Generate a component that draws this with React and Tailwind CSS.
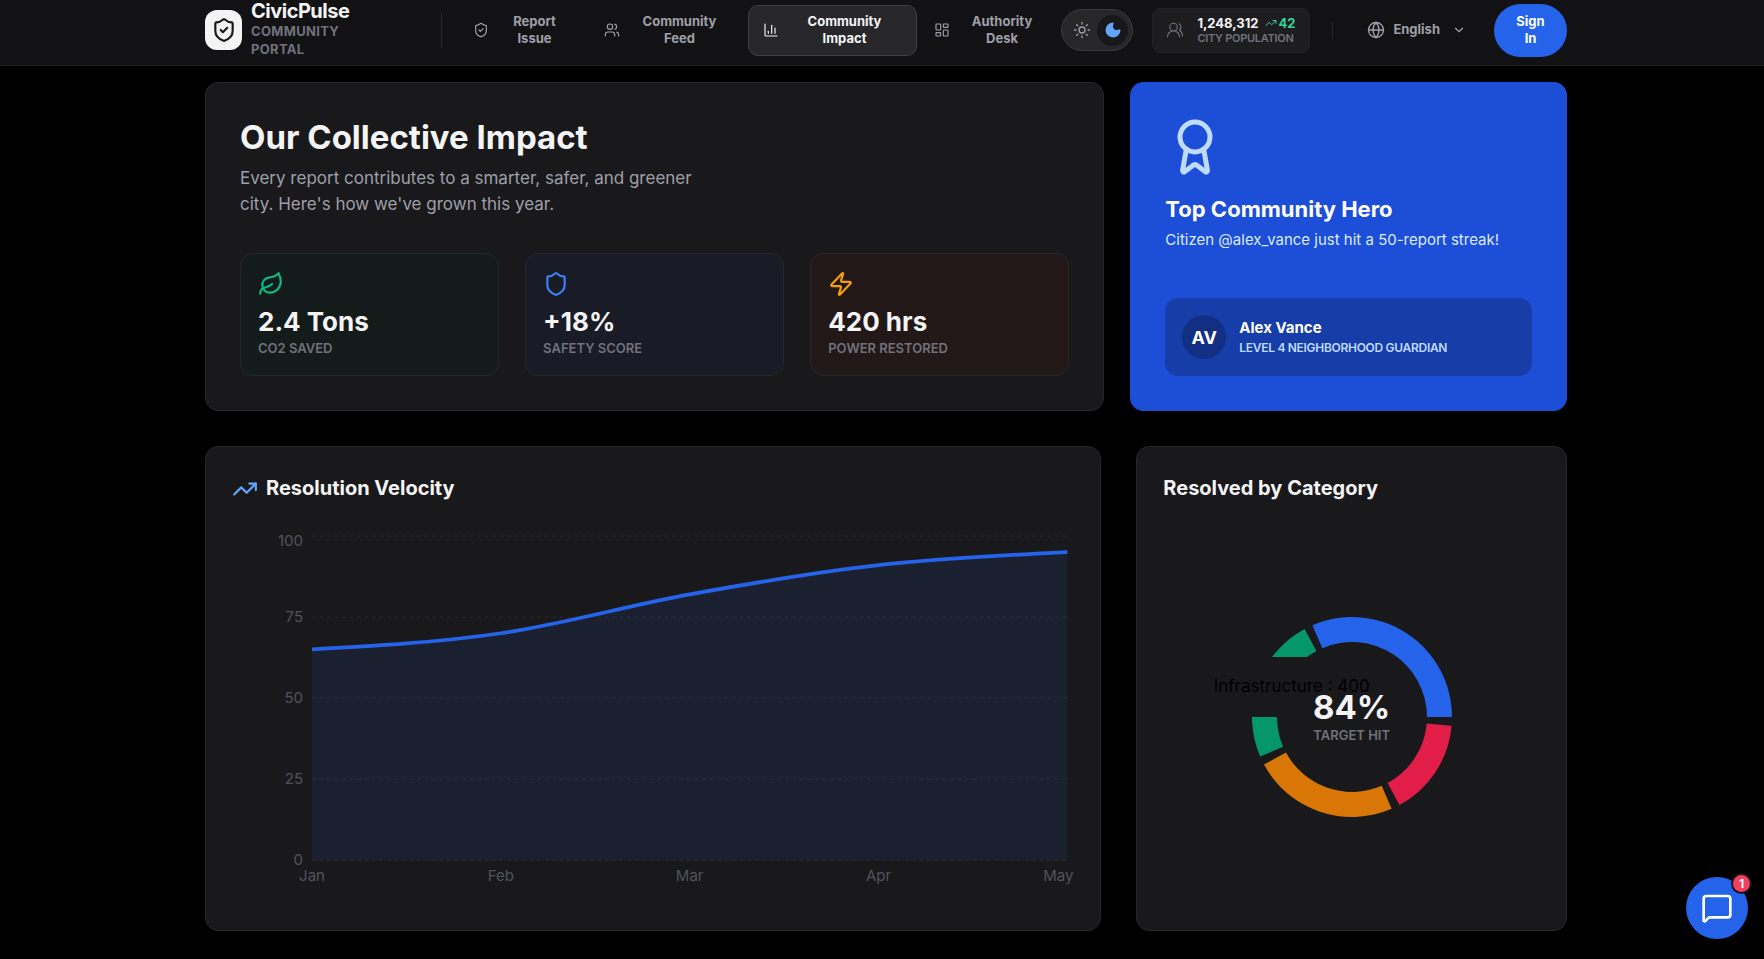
import React, { useState } from "react";
import {
  Award,
  ChartColumn,
  ChevronDown,
  Globe,
  LayoutDashboard,
  Leaf,
  MessageSquare,
  Moon,
  Shield,
  ShieldCheck,
  Sun,
  TrendingUp,
  Users,
  UsersRound,
  Zap,
} from "lucide-react";

const navItems = [
  { id: "report", label: "Report Issue", icon: ShieldCheck, width: "w-[129px]" },
  { id: "feed", label: "Community Feed", icon: Users, width: "w-[157px]" },
  { id: "impact", label: "Community Impact", icon: ChartColumn, width: "w-[169px]" },
  { id: "desk", label: "Authority Desk", icon: LayoutDashboard, width: "w-[142px]" },
];

const stats = [
  { label: "CO2 Saved", value: "2.4 Tons", icon: Leaf, color: "text-[#10b981]", bg: "bg-[#131b1b]" },
  { label: "Safety Score", value: "+18%", icon: Shield, color: "text-[#3b82f6]", bg: "bg-[#191b27]" },
  { label: "Power Restored", value: "420 hrs", icon: Zap, color: "text-[#f59e0b]", bg: "bg-[#221817]" },
];

const velocityData = [
  { name: "Jan", value: 65 },
  { name: "Feb", value: 70 },
  { name: "Mar", value: 82 },
  { name: "Apr", value: 91 },
  { name: "May", value: 95 },
];

const categoryData = [
  { name: "Infrastructure", value: 400, color: "#2563eb" },
  { name: "Environment", value: 300, color: "#059669" },
  { name: "Utilities", value: 300, color: "#d97706" },
  { name: "Safety", value: 200, color: "#e11d48" },
];

// Monotone cubic through equally spaced points
const getCurve = (points) => {
  const h = points[1].x - points[0].x;
  const s = points.slice(1).map((p, i) => (p.y - points[i].y) / h);
  const m = points.map((p, i) => {
    if (i === 0 || i === points.length - 1) return 0;
    return (
      (Math.sign(s[i - 1]) + Math.sign(s[i])) *
      Math.min(Math.abs(s[i - 1]), Math.abs(s[i]), Math.abs(s[i - 1] + s[i]) / 4)
    );
  });
  const last = points.length - 1;
  m[0] = (3 * s[0] - m[1]) / 2;
  m[last] = (3 * s[last - 1] - m[last - 1]) / 2;

  let d = `M${points[0].x},${points[0].y}`;
  for (let i = 0; i < last; i++) {
    const a = points[i];
    const b = points[i + 1];
    d += `C${a.x + h / 3},${a.y + (m[i] * h) / 3} ${b.x - h / 3},${b.y - (m[i + 1] * h) / 3} ${b.x},${b.y}`;
  }
  return d;
};

const VelocityChart = () => {
  const left = 80;
  const right = 835;
  const top = 6;
  const bottom = 330;
  const toY = (value) => bottom - ((bottom - top) * value) / 100;
  const step = (right - left) / (velocityData.length - 1);
  const points = velocityData.map((d, i) => ({ x: left + i * step, y: toY(d.value) }));
  const curve = getCurve(points);

  return (
    <svg viewBox="0 0 842 374" className="w-full block" role="img" aria-label="Resolution Velocity">
      {[0, 25, 50, 75, 100].map((tick) => (
        <g key={tick}>
          <line
            x1={left}
            x2={right}
            y1={toY(tick)}
            y2={toY(tick)}
            stroke="#27272a"
            strokeWidth="1.25"
            strokeDasharray="3.75 3.75"
          />
          <text
            x={71}
            y={Math.max(toY(tick), 11) + 5}
            textAnchor="end"
            fill="#52525b"
            className="text-[15px]"
          >
            {tick}
          </text>
        </g>
      ))}
      <path d={`${curve}L${right},${bottom}L${left},${bottom}Z`} fill="#2563eb" fillOpacity="0.1" />
      <path d={curve} fill="none" stroke="#2563eb" strokeWidth="3.75" />
      {velocityData.map((d, i) => (
        <text
          key={d.name}
          x={i === velocityData.length - 1 ? 826 : points[i].x}
          y={351}
          textAnchor="middle"
          fill="#52525b"
          className="text-[15px]"
        >
          {d.name}
        </text>
      ))}
    </svg>
  );
};

const getSector = (start, end) => {
  const at = (r, deg) => {
    const a = (deg * Math.PI) / 180;
    return `${100 + r * Math.cos(a)},${100 - r * Math.sin(a)}`;
  };
  return `M${at(100, start)}A100,100 0 0 0 ${at(100, end)}L${at(75, end)}A75,75 0 0 1 ${at(75, start)}Z`;
};

const CategoryChart = () => {
  const total = categoryData.reduce((sum, c) => sum + c.value, 0);
  let angle = 0;
  const sectors = categoryData.map((c) => {
    const sweep = (c.value / total) * 340;
    const d = getSector(angle, angle + sweep);
    angle += sweep + 5;
    return { ...c, d };
  });

  return (
    <div className="relative size-[200px]">
      <svg viewBox="0 0 200 200" className="size-full" role="img" aria-label="Resolved by Category">
        {sectors.map((s) => (
          <path key={s.name} d={s.d} fill={s.color} />
        ))}
      </svg>
      <div className="absolute -left-12 top-10 h-[60px] px-[10px] flex items-center bg-[#19191b] text-black text-[17px] whitespace-nowrap">
        Infrastructure : 400
      </div>
      <div className="absolute inset-0 flex flex-col items-center justify-center">
        <p className="text-[33px] leading-9 font-bold text-zinc-100">84%</p>
        <p className="text-[13px] leading-5 font-semibold text-zinc-500 uppercase">Target Hit</p>
      </div>
    </div>
  );
};

const Header = () => {
  const [active, setActive] = useState("impact");

  return (
    <header className="h-[66px] pl-2 bg-[#121214] border-b border-[#222225]">
      <div className="max-w-[1362px] h-[60px] mx-auto flex items-center justify-between">
        <div className="flex items-center">
          <div className="w-[236px] flex items-center gap-[9px]">
            <div className="w-[37px] h-10 rounded-xl bg-zinc-100 flex items-center justify-center text-zinc-900">
              <ShieldCheck className="size-[26px]" />
            </div>
            <div className="pb-[3px]">
              <p className="text-[20px] leading-[22px] font-bold tracking-tight text-zinc-100">CivicPulse</p>
              <p className="text-[13px] leading-[18px] font-bold tracking-wide text-zinc-500 uppercase">
                Community
                <br />
                Portal
              </p>
            </div>
          </div>
          <div className="h-9 w-px mr-4 bg-[#27272a]" />

          <nav className="flex items-center gap-[2px]">
            {navItems.map(({ id, label, icon: Icon, width }) => (
              <button
                key={id}
                onClick={() => setActive(id)}
                className={`${width} h-[51px] px-[14px] flex items-center gap-2 rounded-[10px] border text-[13px] leading-[17px] font-bold ${
                  active === id
                    ? "bg-[#27272a] border-[#3f3f46] text-zinc-100"
                    : "border-transparent text-zinc-400"
                }`}
              >
                <Icon className="size-4 shrink-0" strokeWidth={1.75} />
                <span className="flex-1 px-2 text-center">{label}</span>
              </button>
            ))}
          </nav>

          <button
            aria-label="Toggle theme"
            className="w-[72px] h-[42px] px-1 rounded-full border border-[#3a3a3e] bg-[#27272a] flex items-center justify-between"
          >
            <span className="size-[31px] flex items-center justify-center">
              <Sun className="size-[18px] text-zinc-400" strokeWidth={1.75} />
            </span>
            <span className="size-[31px] rounded-full bg-[#18181b] flex items-center justify-center">
              <Moon className="size-[18px] text-[#60a5fa] fill-[#60a5fa]" />
            </span>
          </button>
        </div>

        <div className="flex items-center">
          <div className="w-[158px] h-[45px] px-[13px] rounded-lg border border-[#222225] bg-[#1d1d20] flex items-center gap-[13px]">
            <UsersRound className="size-[18px] shrink-0 text-zinc-500" strokeWidth={1.5} />
            <div>
              <p className="flex items-center gap-[6px] text-[13px] leading-4 font-bold text-zinc-100">
                1,248,312
                <span className="flex items-center gap-[2px] text-[#34d399]">
                  <TrendingUp className="size-3" />
                  42
                </span>
              </p>
              <p className="text-[11px] leading-[14px] font-semibold tracking-tight text-zinc-500 uppercase whitespace-nowrap">
                City Population
              </p>
            </div>
          </div>
          <div className="h-[17px] w-px mx-[22px] bg-[#27272a]" />

          <button className="px-3 mr-4 flex items-center gap-2 text-[13px] font-bold text-zinc-400">
            <Globe className="size-[18px]" strokeWidth={1.75} />
            English
            <ChevronDown className="size-[14px] ml-1" />
          </button>
          <button className="w-[73px] h-[53px] px-5 rounded-full bg-[#2563eb] text-white text-[13px] leading-[17px] font-bold">
            Sign In
          </button>
        </div>
      </div>
    </header>
  );
};

const App = () => {
  return (
    <div className="min-h-screen bg-black font-['Inter',sans-serif]">
      <Header />

      <div className="pl-2">
        <main className="max-w-[1362px] mx-auto pt-4 pb-6 flex flex-col gap-[35px]">
          <div className="grid grid-cols-3 gap-[26px]">
            <section className="col-span-2 p-[34px] rounded-[13px] border border-[#27272a] bg-[#19191b]">
              <h1 className="text-[33px] leading-10 font-bold text-zinc-100">Our Collective Impact</h1>
              <p className="mt-2 max-w-[480px] text-[17px] leading-[26px] text-zinc-400">
                Every report contributes to a smarter, safer, and greener city. Here's how we've grown this year.
              </p>
              <div className="mt-9 grid grid-cols-3 gap-[26px]">
                {stats.map(({ label, value, icon: Icon, color, bg }) => (
                  <div key={label} className={`p-[17px] rounded-[13px] border border-[#27272a] ${bg}`}>
                    <Icon className={`size-[26px] ${color}`} />
                    <p className="mt-[7px] text-[26px] leading-[35px] font-bold text-zinc-100">{value}</p>
                    <p className="text-[13px] leading-[19px] font-semibold text-zinc-500 uppercase">{label}</p>
                  </div>
                ))}
              </div>
            </section>

            <section className="p-[34px] rounded-[13px] border border-[#1d4ed8] bg-[#1d4ed8] flex flex-col justify-between">
              <div>
                <Award className="size-[60px] text-[#bfdbfe]" />
                <h2 className="mt-4 text-[22px] leading-8 font-bold text-white">Top Community Hero</h2>
                <p className="mt-1 text-[15px] leading-[22px] text-[#dbeafe]">
                  Citizen @alex_vance just hit a 50-report streak!
                </p>
              </div>
              <div className="p-[17px] rounded-[13px] bg-[#173da9] flex items-center gap-[13px]">
                <div className="size-11 rounded-full bg-[#122f83] flex items-center justify-center text-[18px] font-bold text-white">
                  AV
                </div>
                <div>
                  <p className="text-[15px] leading-[22px] font-bold text-white">Alex Vance</p>
                  <p className="text-[12px] leading-[18px] font-semibold tracking-tight text-[#bfdbfe] uppercase">
                    Level 4 Neighborhood Guardian
                  </p>
                </div>
              </div>
            </section>
          </div>

          <div className="grid grid-cols-3 gap-[35px]">
            <section className="col-span-2 p-[26px] rounded-[13px] border border-[#27272a] bg-[#19191b]">
              <h2 className="mb-[26px] flex items-center gap-2 text-[20px] leading-[31px] font-bold text-zinc-100">
                <TrendingUp className="size-[26px] text-[#60a5fa]" />
                Resolution Velocity
              </h2>
              <VelocityChart />
            </section>

            <section className="p-[26px] rounded-[13px] border border-[#27272a] bg-[#19191b] flex flex-col">
              <h2 className="mb-[26px] text-[20px] leading-[31px] font-bold text-zinc-100">Resolved by Category</h2>
              <div className="flex-1 flex items-center justify-center">
                <CategoryChart />
              </div>
            </section>
          </div>
        </main>
      </div>

      <button
        aria-label="Open chat"
        className="fixed right-4 bottom-5 size-[62px] rounded-full bg-[#2563eb] text-white flex items-center justify-center"
      >
        <MessageSquare className="size-8" />
        <span className="absolute -top-1 -right-1 size-[21px] rounded-full border-2 border-[#18181b] bg-[#f43f5e] text-[12px] font-bold flex items-center justify-center">
          1
        </span>
      </button>
    </div>
  );
};

export default App;
